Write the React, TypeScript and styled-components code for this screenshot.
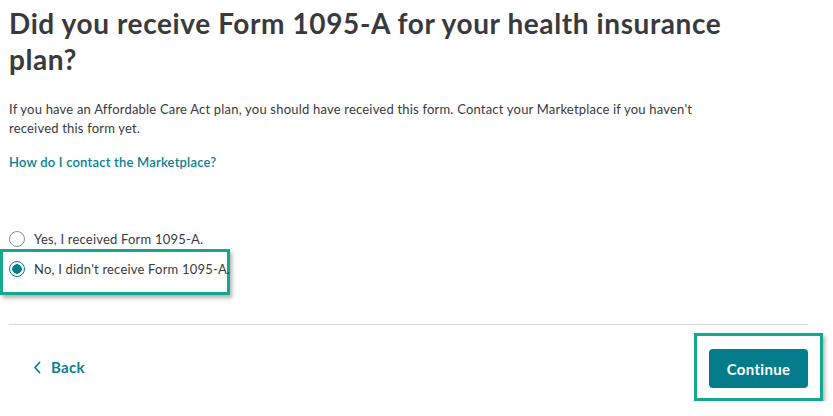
import React, { useState } from 'react';
import styled, { createGlobalStyle } from 'styled-components';

const GlobalStyle = createGlobalStyle`
  html, body {
    margin: 0;
    padding: 0;
    background: #ffffff;
  }
  body {
    font-family: Lato, "Open Sans", "Liberation Sans", sans-serif;
    color: #393a3d;
  }
`;

const options = [
  { id: 'yes', label: 'Yes, I received Form 1095-A.' },
  { id: 'no', label: "No, I didn't receive Form 1095-A." },
];

export default function App() {
  const [answer, setAnswer] = useState('no');

  return (
    <>
      <GlobalStyle />
      <Page>
        <Title>Did you receive Form 1095-A for your health insurance plan?</Title>

        <Intro>
          If you have an Affordable Care Act plan, you should have received this form. Contact your Marketplace if you haven't received this form yet.
        </Intro>

        <HelpLink href="#">How do I contact the Marketplace?</HelpLink>

        <RadioGroup>
          {options.map((o) => {
            const row = (
              <RadioRow key={o.id} onClick={() => setAnswer(o.id)}>
                <RadioCircle $checked={answer === o.id} />
                <RadioLabel>{o.label}</RadioLabel>
              </RadioRow>
            );
            return o.id === 'no' ? <RadioHighlight key={o.id}>{row}</RadioHighlight> : row;
          })}
        </RadioGroup>

        <Divider />

        <Footer>
          <BackButton type="button">
            <svg width="9" height="13" viewBox="0 0 9 13" fill="none">
              <path d="M6.5 1.5L2 6.5l4.5 5" stroke="currentColor" strokeWidth="1.8" strokeLinecap="round" strokeLinejoin="round" />
            </svg>
            Back
          </BackButton>
          <ButtonHighlight>
            <PrimaryButton type="button">Continue</PrimaryButton>
          </ButtonHighlight>
        </Footer>
      </Page>
    </>
  );
}

const Page = styled.div`
  width: 799px;
  padding: 5px 0 0 9px;
  display: flex;
  flex-direction: column;
`;

const Title = styled.h1`
  margin: 0;
  max-width: 740px;
  font-size: 28px;
  line-height: 36px;
  font-weight: 700;
  letter-spacing: 0.6px;
  color: #393a3d;
`;

const Intro = styled.p`
  margin: 23px 0 0;
  max-width: 700px;
  font-size: 13px;
  line-height: 19px;
  letter-spacing: 0.2px;
  color: #393a3d;
`;

const HelpLink = styled.a`
  margin-top: 15px;
  align-self: flex-start;
  font-size: 13px;
  line-height: 19px;
  font-weight: 600;
  letter-spacing: 0.2px;
  color: #0a7f94;
  text-decoration: none;
`;

const RadioGroup = styled.div`
  margin-top: 52px;
  display: flex;
  flex-direction: column;
`;

const RadioRow = styled.label`
  height: 30px;
  display: flex;
  align-items: center;
  gap: 9px;
  cursor: pointer;
`;

const RadioCircle = styled.span<{ $checked: boolean }>`
  width: 16px;
  height: 16px;
  box-sizing: border-box;
  border-radius: 50%;
  border: 1.5px solid ${p => (p.$checked ? '#057d8e' : '#8d9096')};
  background: ${p => (p.$checked ? 'radial-gradient(circle, #057d8e 0 4.5px, #ffffff 5px)' : '#ffffff')};
  flex-shrink: 0;
`;

const RadioLabel = styled.span`
  font-size: 13px;
  letter-spacing: 0.2px;
  white-space: nowrap;
  color: #393a3d;
`;

const RadioHighlight = styled.div`
  align-self: flex-start;
  margin: -5px 0 0 -9px;
  padding: 2px 6px 8px 6px;
  border: 3px solid #14a98a;
  box-shadow: 2px 3px 4px rgba(0, 0, 0, 0.3);
  width: 212px;
`;

const Divider = styled.hr`
  margin: 29px 0 0;
  border: none;
  border-top: 1px solid #d4d7dc;
  width: 100%;
`;

const Footer = styled.div`
  padding-top: 8px;
  display: flex;
  align-items: center;
  justify-content: space-between;
`;

const BackButton = styled.button`
  margin-left: 24px;
  display: flex;
  align-items: center;
  gap: 9px;
  border: none;
  background: none;
  padding: 0;
  font-family: inherit;
  font-size: 15px;
  font-weight: 700;
  letter-spacing: 0.3px;
  color: #0a7f94;
  cursor: pointer;
`;

const ButtonHighlight = styled.div`
  margin-right: -15px;
  padding: 13px 12px 10px 12px;
  border: 3px solid #14a98a;
  box-shadow: 2px 3px 4px rgba(0, 0, 0, 0.3);
`;

const PrimaryButton = styled.button`
  width: 99px;
  height: 39px;
  border: none;
  border-radius: 4px;
  background: #047c8c;
  color: #ffffff;
  font-family: inherit;
  font-size: 15px;
  font-weight: 700;
  letter-spacing: 0.3px;
  cursor: pointer;
`;
